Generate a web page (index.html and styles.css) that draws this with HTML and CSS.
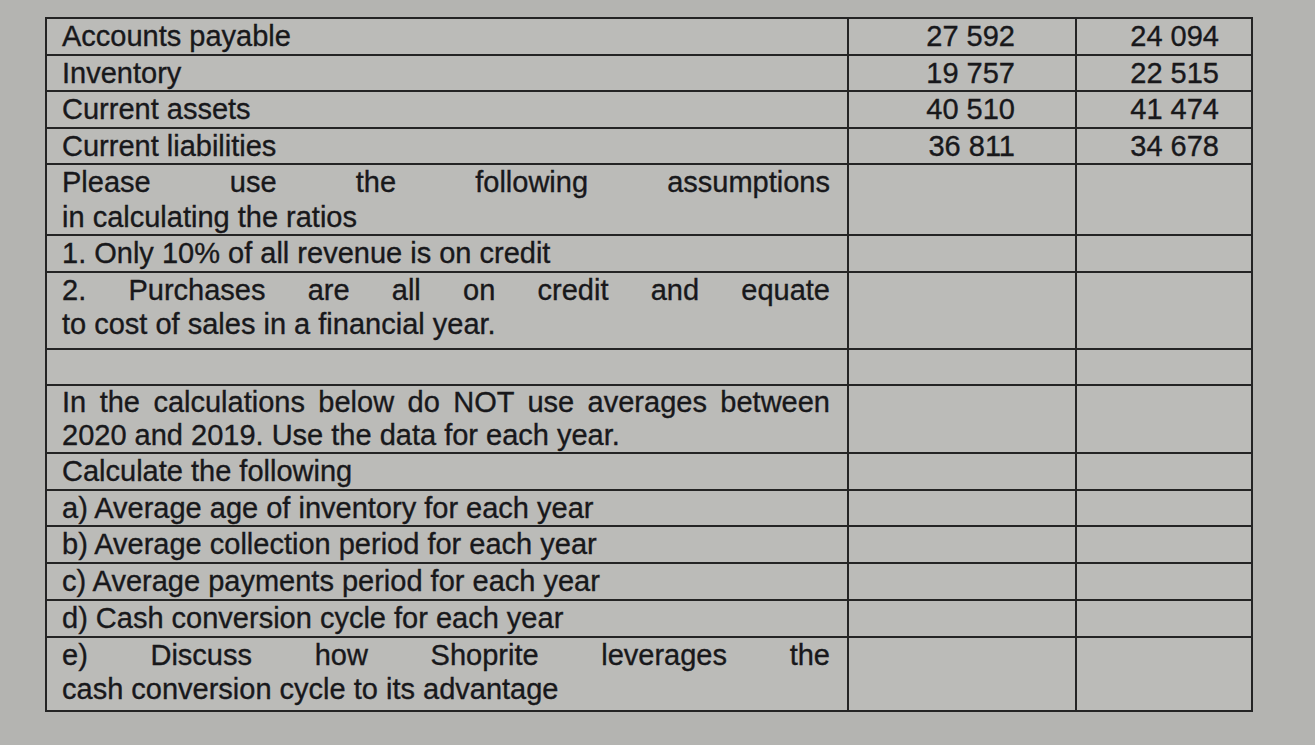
FILE: index.html
```html
<!DOCTYPE html>
<html lang="en">
<head>
<meta charset="utf-8">
<title>Ratios</title>
<link rel="stylesheet" href="styles.css">
</head>
<body>
<table class="sheet">
  <colgroup>
    <col class="c1">
    <col class="c2">
    <col class="c3">
  </colgroup>
  <tr><td class="lbl">Accounts payable</td><td class="n2">27 592</td><td class="n3">24 094</td></tr>
  <tr><td class="lbl">Inventory</td><td class="n2">19 757</td><td class="n3">22 515</td></tr>
  <tr><td class="lbl">Current assets</td><td class="n2">40 510</td><td class="n3">41 474</td></tr>
  <tr><td class="lbl">Current liabilities</td><td class="n2">36 811</td><td class="n3">34 678</td></tr>
  <tr><td class="lbl"><span class="jl">Please use the following assumptions</span>in calculating the ratios</td><td></td><td></td></tr>
  <tr><td class="lbl">1. Only 10% of all revenue is on credit</td><td></td><td></td></tr>
  <tr class="tall"><td class="lbl"><span class="jl">2. Purchases are all on credit and equate</span>to cost of sales in a financial year.</td><td></td><td></td></tr>
  <tr><td class="lbl">&nbsp;</td><td></td><td></td></tr>
  <tr class="tight"><td class="lbl"><span class="jl">In the calculations below do NOT use averages between</span>2020 and 2019. Use the data for each year.</td><td></td><td></td></tr>
  <tr class="low"><td class="lbl">Calculate the following</td><td></td><td></td></tr>
  <tr class="low"><td class="lbl">a) Average age of inventory for each year</td><td></td><td></td></tr>
  <tr class="low"><td class="lbl">b) Average collection period for each year</td><td></td><td></td></tr>
  <tr class="low"><td class="lbl">c) Average payments period for each year</td><td></td><td></td></tr>
  <tr class="low"><td class="lbl">d) Cash conversion cycle for each year</td><td></td><td></td></tr>
  <tr class="tallish"><td class="lbl"><span class="jl">e) Discuss how Shoprite leverages the</span>cash conversion cycle to its advantage</td><td></td><td></td></tr>
</table>
</body>
</html>
```
FILE: styles.css
```css
html, body {
  margin: 0;
  padding: 0;
}
body {
  background: #b4b4b1;
  width: 1315px;
  height: 745px;
  overflow: hidden;
  font-family: "Liberation Sans", Arial, sans-serif;
  color: #18181b;
}
.sheet {
  margin: 17px 0 0 45px;
  width: 1206px;
  border-collapse: collapse;
  table-layout: fixed;
  background: #bbbbb8;
  border: 2px solid #242424;
}
.c1 { width: 802px; }
.c2 { width: 228px; }
.c3 { width: 176px; }
.sheet td {
  border: 2px solid #242424;
  font-size: 29px;
  line-height: 34.5px;
  padding: 0;
  vertical-align: top;
  -webkit-text-stroke: 0.35px #18181b;
}
.lbl {
  padding: 0 17px 0 15px !important;
  text-align: left;
}
.jl {
  display: block;
  text-align: justify;
  text-align-last: justify;
}
.n2 {
  text-align: right;
  padding-right: 60px !important;
}
.n3 {
  text-align: right;
  padding-right: 32px !important;
}
.tall .lbl {
  padding-bottom: 6px !important;
}
.tight td {
  line-height: 33px;
}
.low td {
  line-height: 34.7px;
}
.tallish .lbl {
  padding-bottom: 3px !important;
}
```
